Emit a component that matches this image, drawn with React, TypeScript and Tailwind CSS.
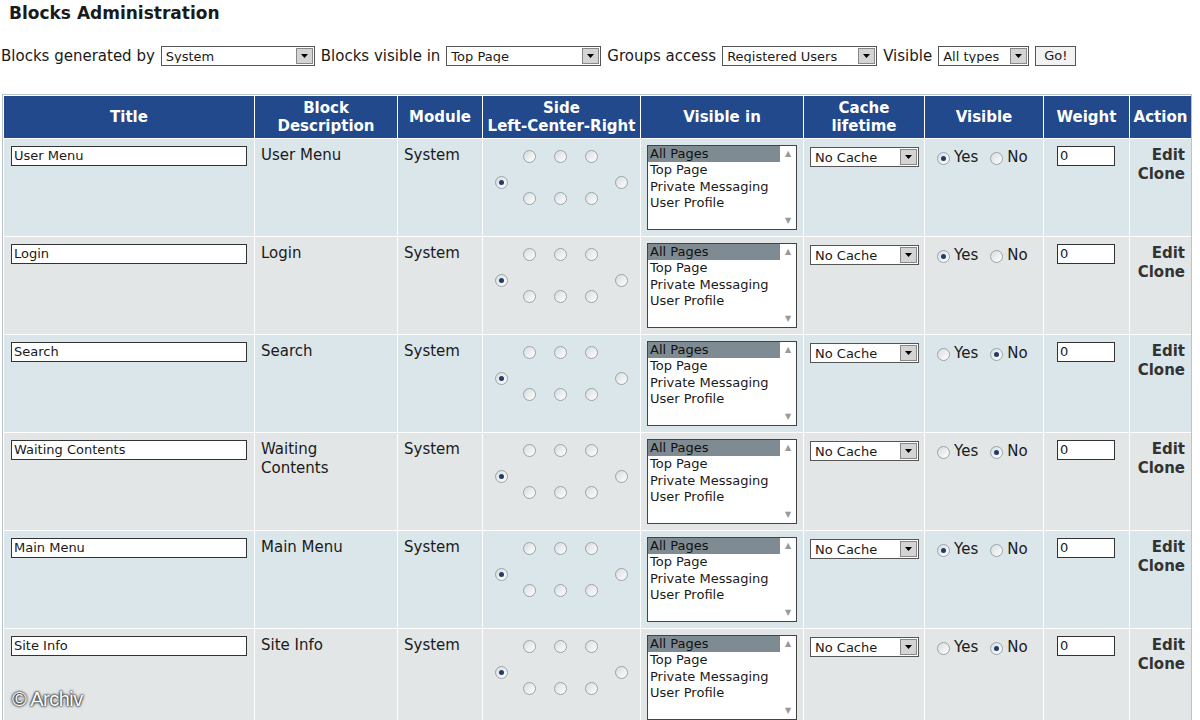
import React from 'react';

const rows = [
  { title: 'User Menu', desc: ['User Menu'], yes: true },
  { title: 'Login', desc: ['Login'], yes: true },
  { title: 'Search', desc: ['Search'], yes: false },
  { title: 'Waiting Contents', desc: ['Waiting', 'Contents'], yes: false },
  { title: 'Main Menu', desc: ['Main Menu'], yes: true },
  { title: 'Site Info', desc: ['Site Info'], yes: false },
];

const Radio = ({ on = false }: { on?: boolean }) => (
  <span className="inline-block w-[13px] h-[13px] rounded-full border border-[#9aa4aa] bg-gradient-to-br from-[#d8dcde] to-white relative shrink-0">
    {on && <span className="absolute left-[3px] top-[3px] w-[5px] h-[5px] rounded-full bg-[#1f3d66]" />}
  </span>
);

const Select = ({ label, w, small = false }: { label: string; w: string; small?: boolean }) => (
  <span className={`inline-flex items-center h-[20px] border border-[#555] bg-white ${w}`}>
    <span className={`flex-1 pl-1 ${small ? 'text-[13px]' : 'text-[13px]'} leading-none truncate`}>{label}</span>
    <span className="w-[17px] h-[16px] mr-[1px] bg-[#d4d4d4] border border-[#888] flex items-center justify-center">
      <svg width="7" height="4" viewBox="0 0 7 4"><path d="M0 0h7L3.5 4z" fill="#000" /></svg>
    </span>
  </span>
);

const cols = ['w-[250px]', 'w-[143px]', 'w-[85px]', 'w-[158px]', 'w-[163px]', 'w-[121px]', 'w-[119px]', 'w-[86px]', 'w-[63px]'];

export default function App() {
  return (
    <div className="w-[1200px] h-[720px] overflow-hidden bg-white text-[#1a1a1a] relative" style={{ fontFamily: '"DejaVu Sans", Verdana, sans-serif' }}>
      <h1 className="pl-[9px] pt-[2px] text-[17px] font-bold leading-[22px]">Blocks Administration</h1>
      <div className="flex items-center gap-[6px] pl-[1px] mt-[21px] text-[15px] whitespace-nowrap">
        <span>Blocks generated by</span>
        <Select label="System" w="w-[154px]" />
        <span>Blocks visible in</span>
        <Select label="Top Page" w="w-[155px]" />
        <span>Groups access</span>
        <Select label="Registered Users" w="w-[155px]" />
        <span>Visible</span>
        <Select label="All types" w="w-[91px]" />
        <span className="h-[20px] px-[8px] border border-[#555] bg-[#f2f2f2] text-[13px] leading-[18px]">Go!</span>
      </div>
      <div className="mt-[26px] ml-[2px] w-[1190px] border border-[#b9c3c8] p-[1px] bg-white">
        <div className="grid grid-cols-[250px_142px_84px_157px_162px_120px_118px_85px_61px] gap-[1px] bg-white">
          {['Title', 'Block\nDescription', 'Module', 'Side\nLeft-Center-Right', 'Visible in', 'Cache\nlifetime', 'Visible', 'Weight', 'Action'].map((h) => (
            <div key={h} className="h-[42px] bg-[#22498c] text-white font-bold text-[15px] leading-[18px] flex items-center justify-center text-center whitespace-pre">
              {h}
            </div>
          ))}
          {rows.map((r, i) => {
            const bg = i % 2 === 0 ? 'bg-[#dae6ea]' : 'bg-[#e2e6e7]';
            const c = `${bg} h-[97px] text-[15px]`;
            return (
              <React.Fragment key={r.title}>
                <div className={`${c} pl-[7px] pt-[7px]`}>
                  <div className="w-[236px] h-[20px] border border-[#333] bg-white text-[13px] leading-[18px] pl-[2px]">{r.title}</div>
                </div>
                <div className={`${c} pl-[6px] pt-[7px] leading-[19px]`}>
                  {r.desc.map((d) => <div key={d}>{d}</div>)}
                </div>
                <div className={`${c} pl-[6px] pt-[7px] leading-[19px]`}>System</div>
                <div className={`${c} relative`}>
                  <div className="absolute left-[40px] top-[11px] flex gap-[18px]"><Radio /><Radio /><Radio /></div>
                  <div className="absolute left-[12px] top-[34px]"><Radio on /></div>
                  <div className="absolute left-[132px] top-[34px]"><Radio /></div>
                  <div className="absolute left-[40px] top-[53px] flex gap-[18px]"><Radio /><Radio /><Radio /></div>
                </div>
                <div className={`${c} pl-[6px] pt-[6px]`}>
                  <div className="w-[150px] h-[85px] border border-[#444] bg-white flex text-[13px] leading-[16.5px]">
                    <div className="flex-1">
                      <div className="bg-[#7f8b92] text-[#111] pl-[2px]">All Pages</div>
                      <div className="pl-[2px]">Top Page</div>
                      <div className="pl-[2px] whitespace-nowrap">Private Messaging</div>
                      <div className="pl-[2px]">User Profile</div>
                    </div>
                    <div className="w-[16px] flex flex-col justify-between items-center py-[4px] text-[#999] text-[8px] leading-none">
                      <span>▲</span><span>▼</span>
                    </div>
                  </div>
                </div>
                <div className={`${c} pl-[6px] pt-[7px]`}>
                  <Select label="No Cache" w="w-[109px]" />
                </div>
                <div className={`${c} pl-[12px] pt-[9px] flex items-start gap-[4px] leading-[19px]`}>
                  <span className="mt-[3px]"><Radio on={r.yes} /></span><span>Yes</span>
                  <span className="mt-[3px] ml-[8px]"><Radio on={!r.yes} /></span><span>No</span>
                </div>
                <div className={`${c} pl-[13px] pt-[7px]`}>
                  <div className="w-[58px] h-[20px] border border-[#333] bg-white text-[13px] leading-[18px] pl-[2px]">0</div>
                </div>
                <div className={`${c} pr-[6px] pt-[7px] text-right font-bold text-[#333] leading-[19px]`}>
                  <div>Edit</div><div>Clone</div>
                </div>
              </React.Fragment>
            );
          })}
        </div>
      </div>
      <div className="absolute left-[12px] top-[684px] text-white text-[20px] tracking-tight" style={{ fontFamily: '"Liberation Sans", Arial, sans-serif', textShadow: '0 0 3px #000, 0 0 2px #000' }}>
        © Archiv
      </div>
    </div>
  );
}
